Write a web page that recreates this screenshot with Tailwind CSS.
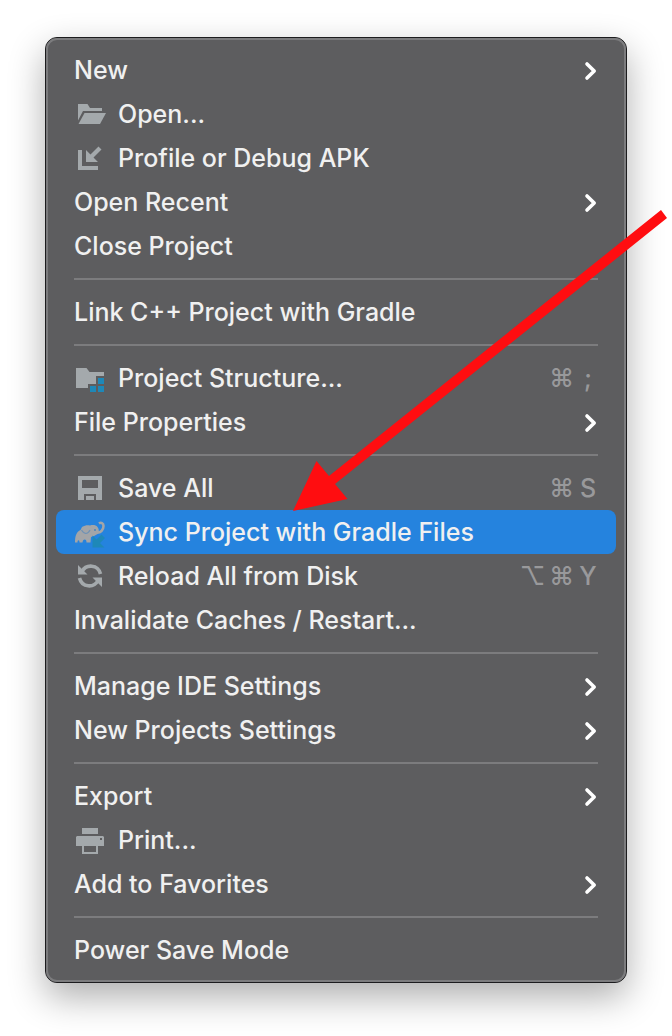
<!DOCTYPE html>
<html lang="en">
<head>
    <meta charset="UTF-8">
    <meta name="viewport" content="width=device-width, initial-scale=1.0">
    <title>File menu</title>
    <script src="https://cdn.jsdelivr.net/npm/@tailwindcss/browser@4"></script>
</head>
<body class="relative bg-white font-['Inter','Liberation_Sans',sans-serif] text-[25px] leading-8 font-medium text-[#f0f0f0]">
    <!-- Shared glyphs -->
    <svg class="hidden">
        <symbol id="chevron" viewBox="0 0 16 24">
            <path d="M5 6l7.2 7L5 20" fill="none" stroke="#fff" stroke-width="3.6" stroke-linecap="round" stroke-linejoin="round"/>
        </symbol>
    </svg>

    <div class="px-[45px] pt-[37px] pb-[53px]">
        <nav aria-label="File" class="rounded-xl border border-[#1c1c1e] bg-[#5d5d5f] shadow-[0_14px_36px_rgba(0,0,0,0.32)]">
            <div class="flex flex-col rounded-[11px] border-2 border-[#7c7c7e] p-2">
                <button type="button" class="flex h-11 w-full items-center justify-between rounded-lg px-[18px] text-left">
                    New
                    <svg class="h-6 w-4"><use href="#chevron"/></svg>
                </button>
                <button type="button" class="flex h-11 w-full items-center gap-3 rounded-lg px-[18px] text-left">
                    <svg class="size-8" viewBox="0 0 32 32" fill="#a4a9ac">
                        <path d="M4 6h9.5l2.5 4h12v3H9L4 22.5z"/>
                        <path d="M10.5 15H32l-6 11H4.5z"/>
                    </svg>
                    Open...
                </button>
                <button type="button" class="flex h-11 w-full items-center gap-3 rounded-lg px-[18px] text-left">
                    <svg class="size-8" viewBox="0 0 32 32" fill="#a4a9ac">
                        <path d="M4 8h4v16h16v4H4z"/>
                        <path d="M12 8l4.5 4.5 8-8 3 3-8 8L24 20H12z"/>
                    </svg>
                    Profile or Debug APK
                </button>
                <button type="button" class="flex h-11 w-full items-center justify-between rounded-lg px-[18px] text-left">
                    Open Recent
                    <svg class="h-6 w-4"><use href="#chevron"/></svg>
                </button>
                <button type="button" class="flex h-11 w-full items-center rounded-lg px-[18px] text-left">Close Project</button>

                <hr class="mx-[18px] my-[10px] border-t-2 border-[#7c7c7e]">

                <button type="button" class="flex h-11 w-full items-center rounded-lg px-[18px] text-left">Link C++ Project with Gradle</button>

                <hr class="mx-[18px] my-[10px] border-t-2 border-[#7c7c7e]">

                <button type="button" class="flex h-11 w-full items-center gap-3 rounded-lg px-[18px] text-left">
                    <svg class="size-8" viewBox="0 0 32 32" fill="#a4a9ac">
                        <path d="M2 6h10.5l3 4H30v4h-8v8h-8v4H2z"/>
                        <path d="M24 16h6v6h-6zM16 24h6v6h-6zM24 24h6v6h-6z" fill="#1e88b8"/>
                    </svg>
                    <span class="flex-1">Project Structure...</span>
                    <span class="flex gap-1 text-[#99999b]"><span>⌘</span><span class="w-5 text-center">;</span></span>
                </button>
                <button type="button" class="flex h-11 w-full items-center justify-between rounded-lg px-[18px] text-left">
                    File Properties
                    <svg class="h-6 w-4"><use href="#chevron"/></svg>
                </button>

                <hr class="mx-[18px] my-[10px] border-t-2 border-[#7c7c7e]">

                <button type="button" class="flex h-11 w-full items-center gap-3 rounded-lg px-[18px] text-left">
                    <svg class="size-8" viewBox="0 0 32 32" fill="#a4a9ac">
                        <path fill-rule="evenodd" d="M4 4h24v24h-6v-6H10v6H4zM8 8v8h16V8z"/>
                        <path d="M12 24h8v4h-8z"/>
                    </svg>
                    <span class="flex-1">Save All</span>
                    <span class="flex gap-1 text-[#99999b]"><span>⌘</span><span class="w-5 text-center">S</span></span>
                </button>
                <button type="button" class="flex h-11 w-full items-center gap-3 rounded-lg bg-[#2583de] px-[18px] text-left">
                    <svg class="size-8" viewBox="0 0 32 32">
                        <path d="M1 26.5C1 20 2.500 15.500 6.500 14l1.500-3c3-2 6-2 8-1.500 3-1 6-.5 7.500 1.500 1.500 2 1.500 4 1 6.500L20 20l-3 1-.5 5.500h-4c0-2-.5-3-1.800-3S8.800 24.500 8.500 26.500H5.500c0-1.500-.3-2.200-1-2.200s-1 .7-1 2.200z" fill="#a3a5a8"/>
                        <path d="M22.500 16.500c4 .5 7-2.500 7-6.500 0-3-2.500-4-4.500-2.500" fill="none" stroke="#a3a5a8" stroke-width="2.600"/>
                        <path d="M7.500 14c1.500 2.500 3 3.500 4.500 3.500s3-1.500 4-3.500" fill="none" stroke="#7092b5" stroke-width="1.200"/>
                        <circle cx="21" cy="14" r="1" fill="#4f83b5"/>
                        <path d="M18.500 19.500l4 4 5-5 3.500 3.500-5 5 4.500 4.500h-12z" fill="#1e88b8"/>
                    </svg>
                    Sync Project with Gradle Files
                </button>
                <button type="button" class="flex h-11 w-full items-center gap-3 rounded-lg px-[18px] text-left">
                    <svg class="size-8" viewBox="0 0 32 32">
                        <path d="M8 11.500C12 4 24 4 26.500 14M24 20.500C20 28 8 28 5.500 18" fill="none" stroke="#a4a9ac" stroke-width="3.6"/>
                        <path d="M4 5v9.500h9.500zM28 27v-9.500h-9.500z" fill="#a4a9ac"/>
                    </svg>
                    <span class="flex-1">Reload All from Disk</span>
                    <span class="flex gap-1 text-[#99999b]"><span>⌥</span><span>⌘</span><span class="w-5 text-center">Y</span></span>
                </button>
                <button type="button" class="flex h-11 w-full items-center rounded-lg px-[18px] text-left">Invalidate Caches / Restart...</button>

                <hr class="mx-[18px] my-[10px] border-t-2 border-[#7c7c7e]">

                <button type="button" class="flex h-11 w-full items-center justify-between rounded-lg px-[18px] text-left">
                    Manage IDE Settings
                    <svg class="h-6 w-4"><use href="#chevron"/></svg>
                </button>
                <button type="button" class="flex h-11 w-full items-center justify-between rounded-lg px-[18px] text-left">
                    New Projects Settings
                    <svg class="h-6 w-4"><use href="#chevron"/></svg>
                </button>

                <hr class="mx-[18px] my-[10px] border-t-2 border-[#7c7c7e]">

                <button type="button" class="flex h-11 w-full items-center justify-between rounded-lg px-[18px] text-left">
                    Export
                    <svg class="h-6 w-4"><use href="#chevron"/></svg>
                </button>
                <button type="button" class="flex h-11 w-full items-center gap-3 rounded-lg px-[18px] text-left">
                    <svg class="size-8" viewBox="0 0 32 32" fill="#a4a9ac">
                        <path d="M8 4h16v6H8z"/>
                        <path fill-rule="evenodd" d="M3 12h26l1 1v9h-6v8H8v-8H2v-9zM10 22v6h12v-6zM26 14v2h2v-2z"/>
                    </svg>
                    Print...
                </button>
                <button type="button" class="flex h-11 w-full items-center justify-between rounded-lg px-[18px] text-left">
                    Add to Favorites
                    <svg class="h-6 w-4"><use href="#chevron"/></svg>
                </button>

                <hr class="mx-[18px] my-[10px] border-t-2 border-[#7c7c7e]">

                <button type="button" class="flex h-11 w-full items-center rounded-lg px-[18px] text-left">Power Save Mode</button>
            </div>
        </nav>
    </div>

    <!-- Arrow pointing at the sync item -->
    <svg class="pointer-events-none absolute top-[208px] left-[292px] h-[304px] w-[376px]" viewBox="292 208 376 304" fill="#ff0d10">
        <path d="M293 511l23.500-50 12.500 15L661 210l6 8-332 266 12.500 15z"/>
    </svg>
</body>
</html>
